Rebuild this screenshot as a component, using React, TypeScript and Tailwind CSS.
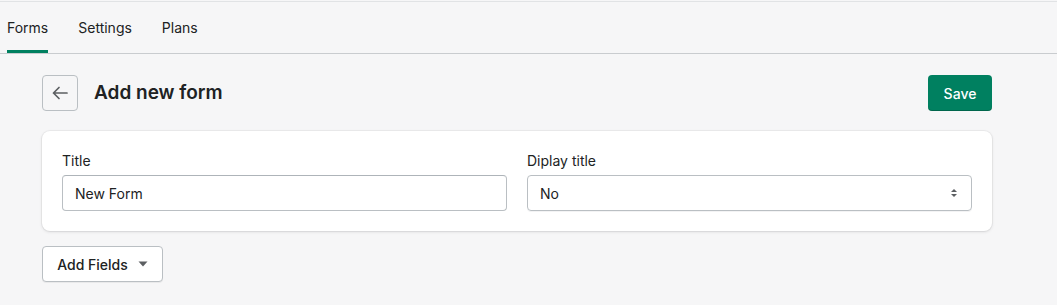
import React from "react";

export default function App() {
  return (
    <div
      className="w-[1057px] h-[305px] bg-[#f6f6f7] text-[#202223] overflow-hidden"
      style={{ fontFamily: "Inter, 'Noto Sans', sans-serif" }}
    >
      <div className="h-[1px] mt-[1px] bg-[#e1e3e5]" />
      <div className="flex gap-[30px] pl-[7px] h-[52px] border-b border-[#c9cccf] text-[14px]">
        <div className="relative flex items-center text-[#202223]">
          Forms
          <div className="absolute left-0 right-0 bottom-0 h-[3px] bg-[#008060]" />
        </div>
        <div className="flex items-center text-[#202223]">Settings</div>
        <div className="flex items-center text-[#202223]">Plans</div>
      </div>

      <div className="pl-[42px] w-[992px] pt-[21px]">
        <div className="flex items-center justify-between h-[36px]">
          <div className="flex items-center">
            <button className="w-[36px] h-[36px] flex items-center justify-center rounded-[4px] border border-[#babfc3] bg-[#f6f6f7]">
              <svg width="20" height="20" viewBox="0 0 20 20" fill="none">
                <path d="M17 10H3.5M9 4.5L3.5 10 9 15.5" stroke="#5c5f62" strokeWidth="1.7" strokeLinecap="round" strokeLinejoin="round" />
              </svg>
            </button>
            <h1 className="ml-[16px] text-[19px] font-semibold leading-[24px]">Add new form</h1>
          </div>
          <button className="w-[64px] h-[36px] rounded-[4px] bg-[#008060] text-white text-[14px] font-medium shadow-[inset_0_-1px_0_rgba(0,0,0,0.2)]">
            Save
          </button>
        </div>

        <div className="mt-[20px] bg-white rounded-[8px] shadow-[0_0_0_1px_rgba(63,63,68,0.05),0_1px_3px_0_rgba(63,63,68,0.15)] p-[20px] grid grid-cols-2 gap-[20px]">
          <div>
            <div className="text-[14px] leading-[20px] mb-[4px]">Title</div>
            <div className="h-[36px] border border-[#babfc3] border-t-[#aeb4b9] rounded-[4px] flex items-center px-[12px] text-[14px]">
              New Form
            </div>
          </div>
          <div>
            <div className="text-[14px] leading-[20px] mb-[4px]">Diplay title</div>
            <div className="h-[36px] border border-[#babfc3] rounded-[4px] flex items-center justify-between pl-[12px] pr-[12px] text-[14px] shadow-[0_1px_0_rgba(22,29,37,0.05)]">
              <span>No</span>
              <svg width="10" height="12" viewBox="0 0 10 12">
                <path d="M5 2L8 5H2z" fill="#5c5f62" />
                <path d="M5 10L2 7h6z" fill="#5c5f62" />
              </svg>
            </div>
          </div>
        </div>

        <button className="mt-[15px] h-[36px] w-[121px] bg-white border border-[#babfc3] rounded-[4px] flex items-center justify-center gap-[10px] text-[14px] font-medium text-[#202223] shadow-[0_1px_0_rgba(0,0,0,0.05)]">
          Add Fields
          <svg width="10" height="6" viewBox="0 0 10 6">
            <path d="M0.5 0.5h9L5 5.5z" fill="#5c5f62" />
          </svg>
        </button>
      </div>
    </div>
  );
}
